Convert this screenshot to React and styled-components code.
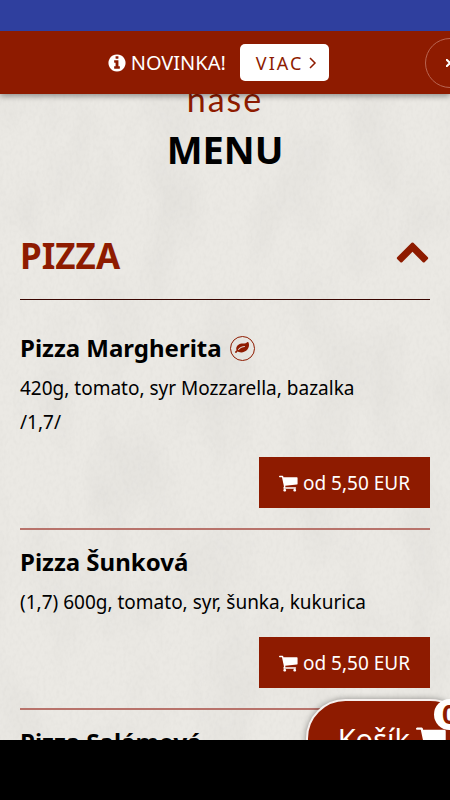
import React from 'react';
import styled, { createGlobalStyle } from 'styled-components';

const red = '#8e1b00';

const GlobalStyle = createGlobalStyle`
  * {
    box-sizing: border-box;
  }
  body {
    margin: 0;
    font-family: 'Noto Sans', 'Open Sans', sans-serif;
    color: #000;
    background-color: #000;
  }
  button {
    font-family: inherit;
    cursor: pointer;
  }
`;

const Container = styled.div`
  height: 100vh;
  display: flex;
  flex-direction: column;
`;

const StatusBar = styled.div`
  flex: none;
  height: 31px;
  background-color: #2f3f9e;
`;

const NavBar = styled.div`
  flex: none;
  height: 60px;
  background-color: #000;
`;

const Screen = styled.div`
  flex: 1;
  min-height: 0;
  position: relative;
  overflow: hidden;
  background-color: #ebe9e4;
`;

const Texture = styled.svg`
  position: absolute;
  inset: 0;
  width: 100%;
  height: 100%;
`;

const Notice = styled.aside`
  position: absolute;
  top: 0;
  left: 0;
  right: 0;
  z-index: 2;
  height: 63px;
  padding-right: 14px;
  display: grid;
  grid-template-columns: 1fr auto 1fr;
  align-items: center;
  color: white;
  background-color: ${red};
  box-shadow: 0 2px 6px rgba(0, 0, 0, 0.4);
`;

const NoticeText = styled.div`
  grid-column: 2;
  display: flex;
  align-items: center;
  font-size: 20px;
  line-height: 36px;
`;

const NoticeLink = styled.a`
  height: 37px;
  margin-left: 14px;
  padding: 0 12px 0 16px;
  display: flex;
  align-items: center;
  gap: 6px;
  border-radius: 5px;
  font-size: 18px;
  letter-spacing: 2px;
  text-decoration: none;
  color: ${red};
  background-color: white;
`;

const Close = styled.button`
  justify-self: end;
  width: 50px;
  height: 50px;
  margin-right: -39px;
  padding: 0;
  display: flex;
  align-items: center;
  justify-content: center;
  border: 1px solid #b96552;
  border-radius: 50%;
  color: white;
  background: none;
`;

const Icon = styled.svg`
  flex: none;
  width: ${(props) => props.$size}px;
  height: ${(props) => props.$size}px;
  margin-right: ${(props) => props.$gap || 0}px;
  fill: currentColor;
`;

const LineIcon = styled.svg`
  flex: none;
  fill: none;
  stroke: currentColor;
  stroke-width: ${(props) => props.$weight};
`;

const Page = styled.main`
  position: relative;
  padding: 48px 20px 0;
`;

const Title = styled.h1`
  margin: 0;
  text-align: center;
  font-size: 38px;
  line-height: 60px;
`;

const Script = styled.span`
  display: block;
  font-family: Lato, sans-serif;
  font-size: 34px;
  font-weight: 400;
  line-height: 40px;
  letter-spacing: 2px;
  color: ${red};
`;

const Category = styled.h2`
  margin: 36px 0 0;
  border-bottom: 1px solid #3a0500;
`;

const Toggle = styled.button`
  width: 100%;
  height: 84px;
  padding: 0 0 4px;
  display: flex;
  align-items: center;
  justify-content: space-between;
  border: none;
  font-size: 35px;
  font-weight: 700;
  color: ${red};
  background: none;

  svg {
    margin-bottom: 10px;
  }
`;

const List = styled.ul`
  margin: 0;
  padding: 16px 0 0;
  list-style: none;
`;

const Item = styled.li`
  padding: 15px 0 20px;
  display: flex;
  flex-direction: column;
  border-bottom: 2px solid #b8736b;
`;

const Name = styled.h3`
  margin: 0;
  display: flex;
  align-items: center;
  gap: 8px;
  font-size: 24px;
  line-height: 34px;
`;

const Veggie = styled.span`
  width: 25px;
  height: 25px;
  display: flex;
  align-items: center;
  justify-content: center;
  border: 1px solid ${red};
  border-radius: 50%;
  color: ${red};
`;

const Desc = styled.p`
  margin: 6px 0 18px;
  padding-right: 40px;
  font-size: 19px;
  line-height: 34px;
`;

const Price = styled.button`
  align-self: flex-end;
  height: 51px;
  padding: 0 20px;
  display: flex;
  align-items: center;
  border: none;
  font-size: 19px;
  color: white;
  background-color: ${red};
`;

const Basket = styled.button`
  position: absolute;
  right: -20px;
  bottom: -38px;
  z-index: 2;
  height: 79px;
  padding: 0 20px 0 30px;
  display: flex;
  align-items: center;
  gap: 6px;
  border: 2px solid #f6f0ee;
  border-radius: 40px;
  font-size: 29px;
  color: white;
  background-color: ${red};
  box-shadow: 0 0 6px rgba(0, 0, 0, 0.4);
`;

const Badge = styled.span`
  position: absolute;
  top: -2px;
  right: -8px;
  width: 42px;
  height: 31px;
  padding-left: 8px;
  border-radius: 16px;
  text-align: left;
  font-size: 26px;
  font-weight: 700;
  line-height: 30px;
  color: ${red};
  background-color: white;
`;

const paths = {
  info: 'M1152 1376v-160q0-14-9-23t-23-9h-96v-512q0-14-9-23t-23-9h-320q-14 0-23 9t-9 23v160q0 14 9 23t23 9h96v320h-96q-14 0-23 9t-9 23v160q0 14 9 23t23 9h448q14 0 23-9t9-23zm-128-896v-160q0-14-9-23t-23-9h-192q-14 0-23 9t-9 23v160q0 14 9 23t23 9h192q14 0 23-9t9-23zm640 416q0 209-103 385.5t-279.5 279.5-385.5 103-385.5-103-279.5-279.5-103-385.5 103-385.5 279.5-279.5 385.5-103 385.5 103 279.5 279.5 103 385.5z',
  cart: 'M640 1536q0 52-38 90t-90 38-90-38-38-90 38-90 90-38 90 38 38 90zm896 0q0 52-38 90t-90 38-90-38-38-90 38-90 90-38 90 38 38 90zm128-1088v512q0 24-16.5 42.5t-40.5 21.5l-1044 122q13 60 13 70 0 16-24 64h920q26 0 45 19t19 45-19 45-45 19h-1024q-26 0-45-19t-19-45q0-11 8-31.5t16-36 21.5-40 15.5-29.5l-177-823h-204q-26 0-45-19t-19-45 19-45 45-19h256q16 0 28.5 6.5t19.5 15.5 13 24.5 8 26 5.5 29.5 4.5 26h1201q26 0 45 19t19 45z',
  leaf: 'M1280 704q0-26-19-45t-45-19q-172 0-318 49.5t-259.5 134-235.5 219.5q-19 21-19 45 0 26 19 45t45 19q24 0 45-19 27-24 74-71t67-66q137-124 268.5-176t313.5-52q26 0 45-19t19-45zm512-198q0 95-20 193-46 224-184.5 383t-357.5 268q-214 108-438 108-148 0-286-47-15-5-88-42t-96-37q-16 0-39.5 32t-45 70-52.5 70-60 32q-43 0-63.5-17.5t-45.5-59.5q-2-4-6-11t-5.5-10-3-9.5-1.5-13.5q0-35 31-73.5t68-65.5 68-56 31-48q0-4-14-38t-16-44q-9-51-9-104 0-115 43.5-220t119-184.5 170.5-139 204-95.5q55-18 145-25.5t179.5-9 178.5-6 163.5-24 113.5-56.5l29.5-29.5 29.5-28 27-20 36.5-16 43.5-4.5q39 0 70.5 46t47.5 112 24 124 8 96z',
  up: 'M1683 1331l-166 165q-19 19-45 19t-45-19l-531-531-531 531q-19 19-45 19t-45-19l-166-165q-19-19-19-45.5t19-45.5l742-741q19-19 45-19t45 19l742 741q19 19 19 45.5t-19 45.5z',
};

const Glyph = ({ name, size, gap }) => (
  <Icon viewBox="0 0 1792 1792" $size={size} $gap={gap} aria-hidden="true">
    <path d={paths[name]} />
  </Icon>
);

const pizzas = [
  {
    name: 'Pizza Margherita',
    desc: '420g, tomato, syr Mozzarella, bazalka /1,7/',
    price: 'od 5,50 EUR',
    veggie: true,
  },
  {
    name: 'Pizza Šunková',
    desc: '(1,7) 600g, tomato, syr, šunka, kukurica',
    price: 'od 5,50 EUR',
  },
  { name: 'Pizza Salámová' },
];

const App = () => {
  return (
    <Container>
      <GlobalStyle />
      <StatusBar />
      <Screen>
        <Texture aria-hidden="true">
          {/* soft stains first, then the woven grain */}
          <filter id="stains">
            <feTurbulence type="fractalNoise" baseFrequency="0.02 0.01" numOctaves="3" seed="4" />
            <feColorMatrix values="0 0 0 0 0.5  0 0 0 0 0.49  0 0 0 0 0.47  0.3 0 0 0 -0.12" />
          </filter>
          <filter id="linen">
            <feTurbulence type="fractalNoise" baseFrequency="0.3 0.2" numOctaves="2" seed="9" />
            <feColorMatrix values="0 0 0 0 0.5  0 0 0 0 0.49  0 0 0 0 0.47  0.2 0 0 0 -0.08" />
          </filter>
          <rect width="100%" height="100%" filter="url(#stains)" />
          <rect width="100%" height="100%" filter="url(#linen)" />
        </Texture>

        <Notice>
          <NoticeText>
            <Glyph name="info" size={20} gap={4} />
            NOVINKA!
            <NoticeLink href="#novinka">
              VIAC
              <LineIcon width="8" height="12" viewBox="0 0 8 12" $weight={1.5} aria-hidden="true">
                <path d="M1 1l5 5-5 5" />
              </LineIcon>
            </NoticeLink>
          </NoticeText>
          <Close aria-label="Zavrieť">
            <LineIcon width="8" height="8" viewBox="0 0 8 8" $weight={2} aria-hidden="true">
              <path d="M0 0l8 8M8 0l-8 8" />
            </LineIcon>
          </Close>
        </Notice>

        <Page>
          <Title>
            <Script>naše</Script>
            MENU
          </Title>

          <Category>
            <Toggle aria-expanded="true">
              PIZZA
              <Glyph name="up" size={35} />
            </Toggle>
          </Category>

          <List>
            {pizzas.map((pizza) => (
              <Item key={pizza.name}>
                <Name>
                  {pizza.name}
                  {pizza.veggie && (
                    <Veggie>
                      <Glyph name="leaf" size={14} />
                    </Veggie>
                  )}
                </Name>
                {pizza.desc && <Desc>{pizza.desc}</Desc>}
                {pizza.price && (
                  <Price>
                    <Glyph name="cart" size={20} gap={4} />
                    {pizza.price}
                  </Price>
                )}
              </Item>
            ))}
          </List>
        </Page>

        <Basket>
          Košík
          <Glyph name="cart" size={32} />
          <Badge>0</Badge>
        </Basket>
      </Screen>
      <NavBar />
    </Container>
  );
};

export default App;
